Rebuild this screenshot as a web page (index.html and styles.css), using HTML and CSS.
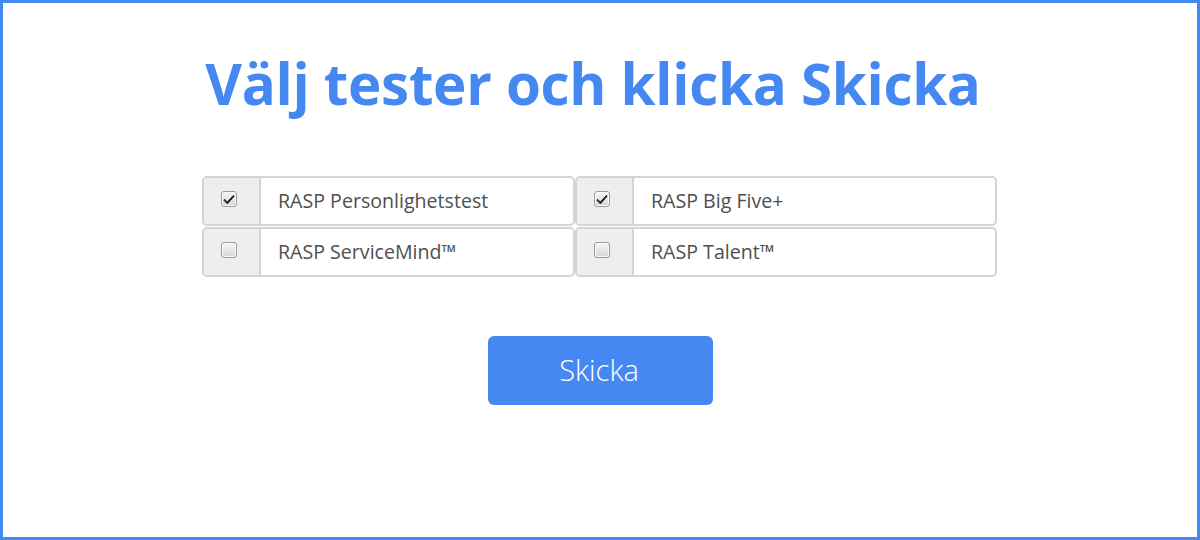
FILE: index.html
```html
<!DOCTYPE html>
<html lang="sv">
<head>
<meta charset="utf-8">
<title>Välj tester</title>
<link rel="stylesheet" href="styles.css">
</head>
<body>
<div class="frame">
  <h1 class="title">Välj tester och klicka Skicka</h1>
  <div class="tests">
    <label class="group">
      <span class="addon"><span class="box"><svg class="tick" viewBox="0 0 12 12"><path d="M1.5 6.2 L4.3 9 L10.5 2.3 L11 3.4 L4.6 10.6 L4 10.6 L1 7.3 Z"/></svg></span></span>
      <span class="name">RASP Personlighetstest</span>
    </label>
    <label class="group">
      <span class="addon"><span class="box"><svg class="tick" viewBox="0 0 12 12"><path d="M1.5 6.2 L4.3 9 L10.5 2.3 L11 3.4 L4.6 10.6 L4 10.6 L1 7.3 Z"/></svg></span></span>
      <span class="name">RASP Big Five+</span>
    </label>
    <label class="group">
      <span class="addon"><span class="box"></span></span>
      <span class="name">RASP ServiceMind™</span>
    </label>
    <label class="group">
      <span class="addon"><span class="box"></span></span>
      <span class="name">RASP Talent™</span>
    </label>
  </div>
  <div class="actions">
    <button class="submit" type="button">Skicka</button>
  </div>
</div>
</body>
</html>
```

FILE: styles.css
```css
* { box-sizing: border-box; }
html, body { margin: 0; padding: 0; }
body {
  width: 1200px;
  height: 540px;
  font-family: "Open Sans", "Noto Sans", "DejaVu Sans", sans-serif;
  background: #fff;
}
.frame {
  width: 1200px;
  height: 540px;
  border: 3px solid #4688f1;
  display: flex;
  flex-direction: column;
  align-items: center;
}
.title {
  margin: 45px 14px 0 0;
  font-size: 56.5px;
  line-height: 72px;
  font-weight: 700;
  color: #4688f1;
  letter-spacing: -0.3px;
}
.tests {
  margin-top: 56px;
  width: 795px;
  margin-left: -1px;
  display: grid;
  grid-template-columns: 373px 422px;
  row-gap: 1px;
}
.group {
  display: flex;
  height: 50px;
  border: 2px solid #d4d4d4;
  border-radius: 5px;
  overflow: hidden;
  background: #fff;
}
.addon {
  width: 57px;
  flex: none;
  background: #eeeeee;
  border-right: 2px solid #d4d4d4;
  display: flex;
  justify-content: center;
  align-items: flex-start;
  padding-top: 13px;
  padding-right: 5px;
}
.box {
  width: 16px;
  height: 16px;
  border: 1px solid #9a9a9a;
  border-radius: 3px;
  background: linear-gradient(#f6f6f6, #d6d6d6);
  box-shadow: inset 0 0 0 1px #fbfbfb;
  display: flex;
  align-items: center;
  justify-content: center;
}
.tick {
  width: 12px;
  height: 12px;
  fill: #1e1e1e;
  stroke: #1e1e1e;
  stroke-width: 0.9;
  stroke-linejoin: round;
}
.name {
  padding-left: 17px;
  display: flex;
  align-items: center;
  font-size: 19.6px;
  color: #4f4f4f;
  padding-bottom: 1px;
}
.actions {
  margin-top: 59px;
}
.submit {
  width: 225px;
  height: 69px;
  border: none;
  border-radius: 6px;
  background: #4688f1;
  color: #fff;
  font-family: "Open Sans", "Noto Sans", sans-serif;
  font-weight: 300;
  font-size: 29px;
  padding: 0 2px 2px 0;
  cursor: pointer;
}
```
